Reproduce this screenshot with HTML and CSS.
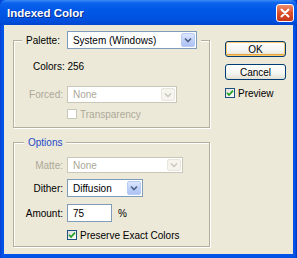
FILE: index.html
```html
<!DOCTYPE html>
<html lang="en">
<head>
    <meta charset="UTF-8">
    <meta name="viewport" content="width=device-width, initial-scale=1.0">
    <title>Indexed Color</title>
    <link rel="stylesheet" href="styles.css">
</head>
<body>

<div class="window">
    <div class="titlebar">
        <span class="title">Indexed Color</span>
        <span class="close">
            <svg width="10" height="10" viewBox="0 0 10 10"><path d="M1.5 1.5 L8.5 8.5 M8.5 1.5 L1.5 8.5" stroke="#fff" stroke-width="2" stroke-linecap="round"/></svg>
        </span>
    </div>

    <div class="content">
        <div class="groups">
            <fieldset class="group palette-group">
                <legend class="palette-legend">
                    <div class="legend-row">
                        <span class="label">Palette:</span>
                        <div class="combo palette-combo">
                            <span class="combo-text">System (Windows)</span>
                            <span class="arrow"><svg width="8" height="6" viewBox="0 0 8 6"><path d="M1 1.5 L4 4.5 L7 1.5" fill="none" stroke="#4d6185" stroke-width="1.6"/></svg></span>
                        </div>
                    </div>
                </legend>

                <div class="colors">Colors: 256</div>

                <div class="row forced-row">
                    <span class="label disabled">Forced:</span>
                    <div class="combo forced-combo disabled">
                        <span class="combo-text">None</span>
                        <span class="arrow"><svg width="8" height="6" viewBox="0 0 8 6"><path d="M1 1.5 L4 4.5 L7 1.5" fill="none" stroke="#c9c7ba" stroke-width="1.4"/></svg></span>
                    </div>
                </div>

                <div class="check-row transparency-row">
                    <span class="checkbox disabled"></span>
                    <span class="disabled">Transparency</span>
                </div>
            </fieldset>

            <fieldset class="group options-group">
                <legend class="options-legend">Options</legend>

                <div class="row matte-row">
                    <span class="label disabled">Matte:</span>
                    <div class="combo matte-combo disabled">
                        <span class="combo-text">None</span>
                        <span class="arrow"><svg width="8" height="6" viewBox="0 0 8 6"><path d="M1 1.5 L4 4.5 L7 1.5" fill="none" stroke="#c9c7ba" stroke-width="1.4"/></svg></span>
                    </div>
                </div>

                <div class="row dither-row">
                    <span class="label">Dither:</span>
                    <div class="combo dither-combo">
                        <span class="combo-text">Diffusion</span>
                        <span class="arrow"><svg width="8" height="6" viewBox="0 0 8 6"><path d="M1 1.5 L4 4.5 L7 1.5" fill="none" stroke="#4d6185" stroke-width="1.6"/></svg></span>
                    </div>
                </div>

                <div class="row amount-row">
                    <span class="label">Amount:</span>
                    <div class="amount">
                        <span class="textbox">75</span>
                        <span class="unit">%</span>
                    </div>
                </div>

                <div class="check-row preserve-row">
                    <span class="checkbox checked">
                        <svg width="8" height="8" viewBox="0 0 8 8"><path d="M1 3.8 L3 6 L7 1.6" fill="none" stroke="#21a121" stroke-width="1.7"/></svg>
                    </span>
                    <span>Preserve Exact Colors</span>
                </div>
            </fieldset>
        </div>

        <div class="buttons">
            <div class="button default">OK</div>
            <div class="button">Cancel</div>
            <div class="check-row preview-row">
                <span class="checkbox checked">
                    <svg width="8" height="8" viewBox="0 0 8 8"><path d="M1 3.8 L3 6 L7 1.6" fill="none" stroke="#21a121" stroke-width="1.7"/></svg>
                </span>
                <span>Preview</span>
            </div>
        </div>
    </div>
</div>

</body>
</html>
```

FILE: styles.css
```css
body {
    margin: 0;
    padding: 0;
    font-family: "Liberation Sans", Arial, sans-serif;
    font-size: 10px;
    color: #000;
}

.window {
    width: 297px;
    height: 258px;
    box-sizing: border-box;
    background: linear-gradient(to right, #0a3fd0, #0053e6 2px, #0053e6 calc(100% - 2px), #0032b8);
    display: flex;
    flex-direction: column;
}

/* title bar */
.titlebar {
    height: 25px;
    flex: none;
    display: flex;
    align-items: center;
    justify-content: space-between;
    padding: 0 3px 0 7px;
    background: linear-gradient(to bottom, #3b8cf7 0, #0c63ec 3px, #0058e8 40%, #0051df 80%, #0046cf 100%);
    border-radius: 6px 6px 0 0;
}

.title {
    color: #fff;
    font-weight: bold;
    font-size: 11.5px;
    text-shadow: 1px 1px 0 #0a2e8c;
}

.close {
    width: 18px;
    height: 18px;
    box-sizing: border-box;
    border: 1px solid #fff;
    border-radius: 3px;
    background: linear-gradient(to bottom, #ec8d6c, #dc4f2b 50%, #c4361a);
    display: flex;
    align-items: center;
    justify-content: center;
}

/* dialog body */
.content {
    flex: 1;
    margin: 0 4px 4px;
    background-color: #ece9d8;
    display: flex;
}

.groups {
    padding: 6px 0 0 9px;
}

.group {
    width: 197px;
    box-sizing: border-box;
    margin: 0;
    padding: 0;
    min-width: 0;
    border: 1px solid #b3af9c;
    box-shadow: 1px 1px 0 #fff, inset 1px 1px 0 #fff;
}

.palette-legend {
    margin-left: 8px;
    padding: 0 4px;
    background-color: #ece9d8;
}

.legend-row {
    display: flex;
    align-items: center;
    gap: 7px;
}

.options-group {
    margin-top: 8px;
    padding-bottom: 5px;
}

.options-legend {
    margin-left: 10px;
    padding: 0 4px;
    line-height: 13px;
    color: #1f48c8;
    background-color: #ece9d8;
}

.colors {
    margin-top: 12px;
    padding-left: 19px;
    line-height: 12px;
}

.row {
    display: grid;
    grid-template-columns: 49px auto;
    column-gap: 4px;
    align-items: center;
    justify-items: start;
}

.row .label {
    justify-self: end;
}

.disabled {
    color: #aca899;
}

.forced-row {
    margin-top: 13px;
}

.matte-row {
    margin-top: 8px;
}

.dither-row {
    margin-top: 6px;
}

.amount-row {
    margin-top: 7px;
}

/* combo boxes */
.combo {
    box-sizing: border-box;
    height: 18px;
    border: 1px solid #7f9db9;
    background-color: #fff;
    display: flex;
    align-items: stretch;
    justify-content: space-between;
}

.combo-text {
    padding-left: 5px;
    display: flex;
    align-items: center;
}

.arrow {
    width: 14px;
    margin: 1px;
    box-sizing: border-box;
    border: 1px solid #b7cbf5;
    border-radius: 2px;
    background: linear-gradient(to bottom, #dce7fd, #bccef8 60%, #aec3f4);
    display: flex;
    align-items: center;
    justify-content: center;
}

.combo.disabled {
    border-color: #c9c7ba;
}

.combo.disabled .arrow {
    border-color: #e8e6dc;
    background: #f5f4ee;
}

.palette-combo {
    width: 130px;
}

.forced-combo {
    width: 110px;
    height: 17px;
}

.matte-combo {
    width: 116px;
    height: 16px;
}

.dither-combo {
    width: 76px;
}

.amount {
    display: flex;
    align-items: center;
    gap: 6px;
}

.textbox {
    box-sizing: border-box;
    width: 45px;
    height: 18px;
    border: 1px solid #7f9db9;
    background-color: #fff;
    padding-left: 5px;
    display: flex;
    align-items: center;
}

/* checkboxes */
.check-row {
    display: flex;
    align-items: center;
    gap: 3px;
    height: 12px;
}

.transparency-row {
    margin-top: 5px;
    margin-bottom: 7px;
    padding-left: 53px;
}

.preserve-row {
    margin-top: 7px;
    padding-left: 53px;
}

.checkbox {
    width: 10px;
    height: 10px;
    box-sizing: border-box;
    border: 1px solid #1c5180;
    background: linear-gradient(135deg, #dcdcd7, #fff);
    display: flex;
    align-items: center;
    justify-content: center;
}

.checkbox.disabled {
    border-color: #cac8bb;
    background: #fff;
}

/* buttons */
.buttons {
    margin-left: 15px;
    padding-top: 16px;
}

.button {
    width: 61px;
    height: 16px;
    box-sizing: border-box;
    border: 1px solid #003c74;
    border-radius: 3px;
    background: linear-gradient(to bottom, #fff, #f4f4f0 60%, #e3e0d3);
    display: flex;
    align-items: center;
    justify-content: center;
    margin-bottom: 7px;
}

.button.default {
    box-shadow: inset 0 0 0 1px #f8c970, inset 0 -1px 0 1px #e5a33a;
}

.preview-row {
    margin-top: 6px;
}
```
